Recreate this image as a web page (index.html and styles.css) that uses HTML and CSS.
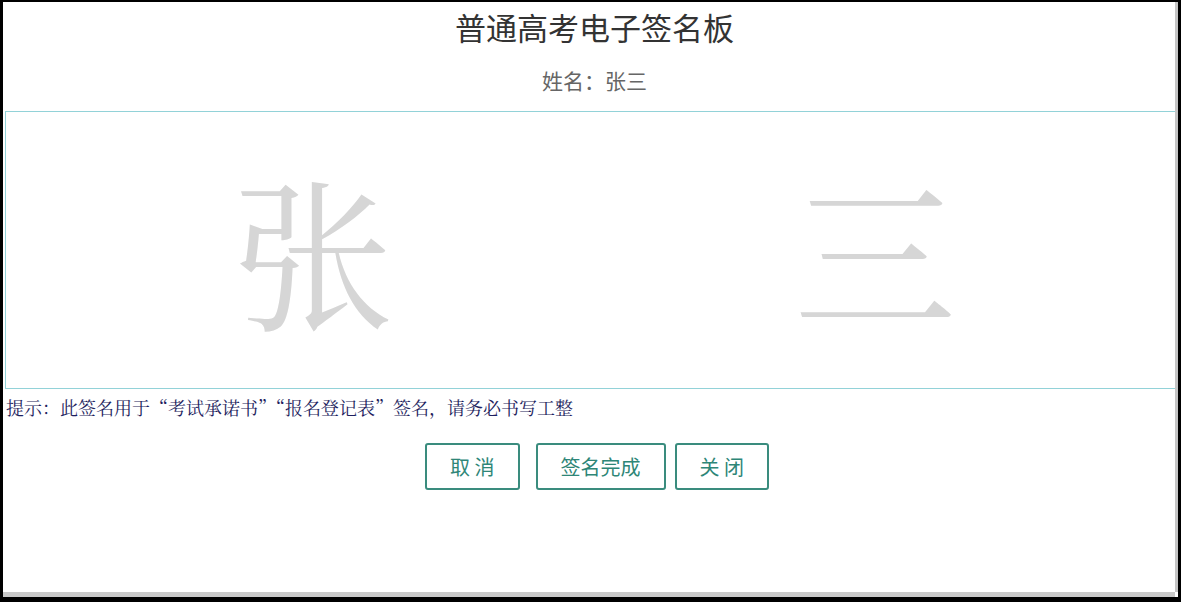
FILE: index.html
```html
<!DOCTYPE html>
<html lang="zh-CN">
<head>
<meta charset="utf-8">
<title>普通高考电子签名板</title>
<link rel="stylesheet" href="styles.css">
</head>
<body>
<div class="window">
  <main class="content">
    <header class="head">
      <h1 class="title">普通高考电子签名板</h1>
      <p class="name">姓名：张三</p>
    </header>
    <section class="pad">
      <span class="glyph">张</span>
      <span class="glyph">三</span>
    </section>
    <p class="hint">提示：此签名用于“考试承诺书”“报名登记表”签名，请务必书写工整</p>
    <div class="actions">
      <button class="btn btn-cancel" type="button">取 消</button>
      <button class="btn" type="button">签名完成</button>
      <button class="btn" type="button">关 闭</button>
    </div>
  </main>
  <div class="vscroll"></div>
  <div class="hscroll"></div>
  <div class="corner"></div>
</div>
</body>
</html>
```

FILE: styles.css
```css
html, body {
  margin: 0;
  padding: 0;
  background: #000;
  height: 602px;
  overflow: hidden;
}

body {
  padding: 2px 3px 5px 3px;
  box-sizing: border-box;
  font-family: "Noto Sans CJK SC", "Noto Sans", sans-serif;
}

.window {
  background: #fff;
  height: 595px;
  display: grid;
  grid-template-columns: 1fr 3px;
  grid-template-rows: 1fr 5px;
  overflow: hidden;
}

.content {
  overflow: hidden;
  display: flex;
  flex-direction: column;
}

.head {
  padding-left: 11px;
  text-align: center;
}

.title {
  margin: 5px 0 0;
  font-size: 31px;
  line-height: 40px;
  font-weight: 400;
  color: #333;
}

.name {
  margin: 18px 0 0;
  font-size: 21px;
  line-height: 30px;
  color: #666;
}

.pad {
  margin: 16px -3px 0 2px;
  border: 1px solid #92d2d8;
  display: grid;
  grid-template-columns: 562px 562px;
  padding-left: 26px;
  align-items: center;
  padding-top: 6px;
  padding-bottom: 10px;
  height: 260px;
  box-sizing: content-box;
}

.glyph {
  text-align: center;
  font-family: "Noto Serif CJK SC", "Noto Sans CJK SC", serif;
  font-size: 162px;
  line-height: 200px;
  font-weight: 400;
  color: #d6d6d6;
}

.hint {
  margin: 6px 0 0 3px;
  font-family: "Noto Serif CJK SC", "Noto Sans CJK SC", serif;
  font-size: 18px;
  line-height: 24px;
  color: #1e1e5e;
}

.actions {
  margin-top: 24px;
  padding-left: 16px;
  display: flex;
  justify-content: center;
  gap: 9px;
}

.btn {
  height: 47px;
  padding: 0 23px;
  border: 2px solid #3a8c7e;
  border-radius: 3px;
  background: #fff;
  color: #2e8677;
  font-family: "Noto Sans CJK SC", sans-serif;
  font-size: 20px;
  line-height: 43px;
  box-sizing: border-box;
}

.btn-cancel {
  margin-right: 7px;
}

.vscroll {
  background: #c4c4c4;
  grid-row: 1;
  grid-column: 2;
}

.hscroll {
  background: #c8c8c8;
  grid-row: 2;
  grid-column: 1;
}

.corner {
  background: #fff;
  grid-row: 2;
  grid-column: 2;
}
```
